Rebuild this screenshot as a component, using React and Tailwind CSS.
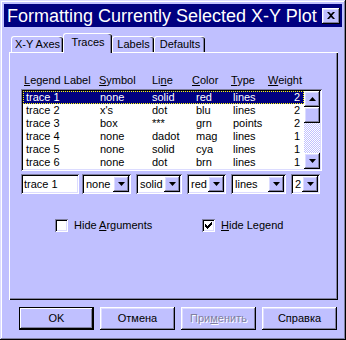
import React from 'react';

const raised =
  'shadow-[inset_-1px_-1px_0_#000,inset_1px_1px_0_#fff,inset_-2px_-2px_0_#8080a0,inset_2px_2px_0_#dcdcff]';
const sunken =
  'shadow-[inset_1px_1px_0_#8080a0,inset_-1px_-1px_0_#fff,inset_2px_2px_0_#000,inset_-2px_-2px_0_#dcdcff]';

const traces = [
  ['trace 1', 'none', 'solid', 'red', 'lines', '2'],
  ['trace 2', "x's", 'dot', 'blu', 'lines', '2'],
  ['trace 3', 'box', '***', 'grn', 'points', '2'],
  ['trace 4', 'none', 'dadot', 'mag', 'lines', '1'],
  ['trace 5', 'none', 'solid', 'cya', 'lines', '1'],
  ['trace 6', 'none', 'dot', 'brn', 'lines', '1'],
];

function Arrow({ up }) {
  return (
    <svg width="7" height="4" viewBox="0 0 7 4" className={up ? 'rotate-180' : ''}>
      <path d="M0 0h7L3.5 4z" fill="#000" />
    </svg>
  );
}

function ArrowButton({ up }) {
  return (
    <div className={`w-[16px] h-[16px] bg-[#c0c0ff] flex items-center justify-center ${raised}`}>
      <Arrow up={up} />
    </div>
  );
}

function Combo({ value, width, className = '' }) {
  return (
    <div className={`h-[20px] bg-white flex items-center p-[2px] ${sunken} ${className}`} style={{ width }}>
      <span className="flex-1 pl-[2px] leading-[16px]">{value}</span>
      <ArrowButton />
    </div>
  );
}

function Tab({ label, selected, width }) {
  return (
    <div
      className={`relative flex items-center justify-center rounded-t-[3px] border-l border-t border-white bg-[#c0c0ff] shadow-[inset_-1px_0_0_#000,inset_-2px_0_0_#8080a0] ${
        selected ? 'h-[20px] -mb-px z-10 pb-[2px]' : 'h-[16px]'
      }`}
      style={{ width }}
    >
      {label}
    </div>
  );
}

function Checkbox({ checked }) {
  return (
    <div className={`w-[13px] h-[13px] bg-white flex items-center justify-center ${sunken}`}>
      {checked && (
        <svg width="7" height="7" viewBox="0 0 7 7">
          <path d="M0 2h1v1h1v1h1V3h1V2h1V1h1V0h1v3H6v1H5v1H4v1H3v1H2V6H1V5H0z" fill="#000" />
        </svg>
      )}
    </div>
  );
}

function Button({ children, primary, disabled }) {
  return (
    <div
      className={`w-[75px] h-[23px] flex items-center justify-center bg-[#c0c0ff] ${
        primary
          ? 'border border-black shadow-[inset_-1px_-1px_0_#000,inset_1px_1px_0_#fff,inset_-2px_-2px_0_#8080a0]'
          : raised
      } ${disabled ? 'text-[#8080a0] [text-shadow:1px_1px_0_#fff]' : 'text-black'}`}
    >
      {children}
    </div>
  );
}

export default function App() {
  return (
    <div
      className={`w-[346px] h-[340px] bg-[#c0c0ff] p-[4px] text-[11px] text-black shadow-[inset_-1px_-1px_0_#000,inset_1px_1px_0_#dcdcff,inset_-2px_-2px_0_#8080a0,inset_2px_2px_0_#fff] font-['Liberation_Sans',Arial,sans-serif] select-none`}
    >
      {/* title bar */}
      <div className="h-[23px] bg-[#000080] flex items-center pl-[3px] pr-[2px]">
        <span className="flex-1 text-white text-[18px] leading-[22px] whitespace-nowrap">
          Formatting Currently Selected X-Y Plot
        </span>
        <div className={`w-[18px] h-[16px] bg-[#c0c0ff] flex items-center justify-center ${raised}`}>
          <svg width="8" height="7" viewBox="0 0 8 7">
            <path d="M0 0h2l2 2 2-2h2L5 3.5 8 7H6L4 5 2 7H0l3-3.5z" fill="#000" />
          </svg>
        </div>
      </div>

      {/* tabs */}
      <div className="flex items-end mt-[6px] ml-[7px]">
        <Tab label="X-Y Axes" width={52} />
        <Tab label="Traces" width={49} selected />
        <Tab label="Labels" width={42} />
        <Tab label="Defaults" width={51} />
      </div>

      {/* panel */}
      <div className="ml-[5px] w-[329px] h-[248px] border-l border-t border-white shadow-[inset_-1px_-1px_0_#000,inset_-2px_-2px_0_#8080a0] pl-[11px] pt-[20px]">
        <div className="flex h-[14px] ml-[3px] leading-[14px]">
          <span className="w-[75px]"><u>L</u>egend Label</span>
          <span className="w-[53px]"><u>S</u>ymbol</span>
          <span className="w-[40px]">Li<u>n</u>e</span>
          <span className="w-[39px]"><u>C</u>olor</span>
          <span className="w-[37px]"><u>T</u>ype</span>
          <span><u>W</u>eight</span>
        </div>

        {/* list */}
        <div className={`mt-[2px] w-[301px] h-[82px] bg-white p-[2px] flex ${sunken}`}>
          <div className="w-[281px] flex flex-col">
            {traces.map((t, i) => (
              <div
                key={i}
                className={`flex h-[13px] leading-[13px] pl-[3px] pr-[4px] ${
                  i === 0
                    ? 'bg-[#000080] text-white outline outline-1 outline-dotted outline-[#ffff00] -outline-offset-1'
                    : ''
                }`}
              >
                <span className="w-[74px]">{t[0]}</span>
                <span className="w-[52px]">{t[1]}</span>
                <span className="w-[44px]">{t[2]}</span>
                <span className="w-[37px]">{t[3]}</span>
                <span className="w-[51px]">{t[4]}</span>
                <span className="w-[16px] text-right">{t[5]}</span>
              </div>
            ))}
          </div>
          <div className="w-[16px] flex flex-col">
            <ArrowButton up />
            <div className={`h-[16px] bg-[#c0c0ff] ${raised}`} />
            <div className="flex-1 bg-[image:repeating-conic-gradient(#ffffff_0_25%,#c0c0ff_0_50%)] bg-[length:2px_2px]" />
            <ArrowButton />
          </div>
        </div>

        {/* edit row */}
        <div className="flex mt-[3px]">
          <div className={`w-[58px] h-[20px] bg-white p-[2px] pl-[3px] leading-[16px] ${sunken}`}>trace 1</div>
          <Combo value="none" width={49} className="ml-[3px]" />
          <Combo value="solid" width={46} className="ml-[5px]" />
          <Combo value="red" width={39} className="ml-[5px]" />
          <Combo value="lines" width={55} className="ml-[5px]" />
          <Combo value="2" width={29} className="ml-[5px]" />
        </div>

        {/* checkboxes */}
        <div className="flex mt-[25px] h-[13px] items-center">
          <div className="flex items-center ml-[34px] w-[147px]">
            <Checkbox />
            <span className="ml-[6px]">Hide <u>A</u>rguments</span>
          </div>
          <div className="flex items-center">
            <Checkbox checked />
            <span className="ml-[6px]"><u>H</u>ide Legend</span>
          </div>
        </div>
      </div>

      {/* buttons */}
      <div className="flex gap-[6px] mt-[7px] ml-[15px]">
        <Button primary>OK</Button>
        <Button>Отмена</Button>
        <Button disabled>При<u>м</u>енить</Button>
        <Button>Справка</Button>
      </div>
    </div>
  );
}
